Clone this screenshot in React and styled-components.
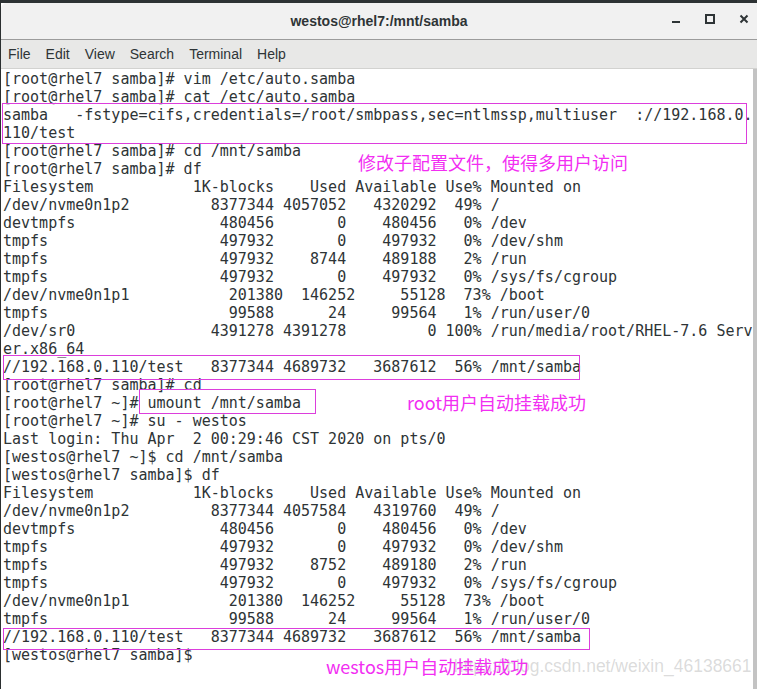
import React from "react";
import styled, { createGlobalStyle } from "styled-components";

const GlobalStyle = createGlobalStyle`
  html, body {
    margin: 0;
    padding: 0;
    background: #ffffff;
  }
  body {
    width: 757px;
    height: 689px;
    overflow: hidden;
  }
`;

const lines = [
  "[root@rhel7 samba]# vim /etc/auto.samba",
  "[root@rhel7 samba]# cat /etc/auto.samba",
  "samba   -fstype=cifs,credentials=/root/smbpass,sec=ntlmssp,multiuser  ://192.168.0.",
  "110/test",
  "[root@rhel7 samba]# cd /mnt/samba",
  "[root@rhel7 samba]# df",
  "Filesystem           1K-blocks    Used Available Use% Mounted on",
  "/dev/nvme0n1p2         8377344 4057052   4320292  49% /",
  "devtmpfs                480456       0    480456   0% /dev",
  "tmpfs                   497932       0    497932   0% /dev/shm",
  "tmpfs                   497932    8744    489188   2% /run",
  "tmpfs                   497932       0    497932   0% /sys/fs/cgroup",
  "/dev/nvme0n1p1           201380  146252     55128  73% /boot",
  "tmpfs                    99588      24     99564   1% /run/user/0",
  "/dev/sr0               4391278 4391278         0 100% /run/media/root/RHEL-7.6 Serv",
  "er.x86_64",
  "//192.168.0.110/test   8377344 4689732   3687612  56% /mnt/samba",
  "[root@rhel7 samba]# cd",
  "[root@rhel7 ~]# umount /mnt/samba",
  "[root@rhel7 ~]# su - westos",
  "Last login: Thu Apr  2 00:29:46 CST 2020 on pts/0",
  "[westos@rhel7 ~]$ cd /mnt/samba",
  "[westos@rhel7 samba]$ df",
  "Filesystem           1K-blocks    Used Available Use% Mounted on",
  "/dev/nvme0n1p2         8377344 4057584   4319760  49% /",
  "devtmpfs                480456       0    480456   0% /dev",
  "tmpfs                   497932       0    497932   0% /dev/shm",
  "tmpfs                   497932    8752    489180   2% /run",
  "tmpfs                   497932       0    497932   0% /sys/fs/cgroup",
  "/dev/nvme0n1p1           201380  146252     55128  73% /boot",
  "tmpfs                    99588      24     99564   1% /run/user/0",
  "//192.168.0.110/test   8377344 4689732   3687612  56% /mnt/samba",
  "[westos@rhel7 samba]$",
];

// magenta boxes drawn on top of the screenshot
const boxes = [
  { left: 1, top: 34, width: 745, height: 41 },
  { left: 2, top: 286, width: 577, height: 25 },
  { left: 138, top: 320, width: 177, height: 25 },
  { left: 2, top: 559, width: 587, height: 22 },
];

const menus = ["File", "Edit", "View", "Search", "Terminal", "Help"];

export default function App() {
  return (
    <>
      <GlobalStyle />
      <Window>
        <TopEdge />
        <TitleBar>
          <Title>westos@rhel7:/mnt/samba</Title>
          <Controls>
            <CtrlButton aria-label="minimize">
              <svg width="10" height="10" viewBox="0 0 10 10">
                <rect x="1" y="7" width="8" height="2" fill="#2e3436" />
              </svg>
            </CtrlButton>
            <CtrlButton aria-label="maximize">
              <svg width="10" height="10" viewBox="0 0 10 10">
                <rect x="1" y="1" width="8" height="8" fill="none" stroke="#2e3436" strokeWidth="2" />
              </svg>
            </CtrlButton>
            <CtrlButton aria-label="close">
              <svg width="10" height="10" viewBox="0 0 10 10">
                <path d="M1.5 1.5 L8.5 8.5 M8.5 1.5 L1.5 8.5" stroke="#2e3436" strokeWidth="2" />
              </svg>
            </CtrlButton>
          </Controls>
        </TitleBar>
        <MenuBar>
          {menus.map((m) => (
            <MenuItem key={m}>{m}</MenuItem>
          ))}
        </MenuBar>
        <TermArea>
          <Screen>
            {lines.map((l, i) => (
              <Line key={i}>{l}</Line>
            ))}
            {boxes.map((b, i) => (
              <MarkBox key={i} style={b} />
            ))}
            <Note $left={357} $top={83}>修改子配置文件，使得多用户访问</Note>
            <Note $left={406} $top={323}>root用户自动挂载成功</Note>
            <Watermark>https://blog.csdn.net/weixin_46138661</Watermark>
            <Note $left={325} $top={587}>westos用户自动挂载成功</Note>
          </Screen>
          <Scrollbar />
        </TermArea>
      </Window>
    </>
  );
}

const Window = styled.div`
  width: 757px;
  height: 689px;
  box-sizing: border-box;
  border-left: 1px solid #2b2f30;
  display: flex;
  flex-direction: column;
  background: #ffffff;
  overflow: hidden;
`;

const TopEdge = styled.div`
  height: 3px;
  background: #2d3234;
  flex: none;
`;

const TitleBar = styled.div`
  height: 36px;
  flex: none;
  position: relative;
  background: #f1f1f1;
  border-bottom: 1px solid #9c9c9c;
  border-top-left-radius: 6px;
  display: flex;
  align-items: center;
  justify-content: center;
`;

const Title = styled.div`
  font-family: "Liberation Sans", Arial, sans-serif;
  font-size: 14px;
  font-weight: 700;
  color: #2e3436;
  margin-top: -1px;
`;

const Controls = styled.div`
  position: absolute;
  right: 8px;
  top: 0;
  bottom: 0;
  display: flex;
  align-items: center;
  gap: 24px;
`;

const CtrlButton = styled.div`
  width: 10px;
  height: 10px;
  display: flex;
  margin-top: -4px;
`;

const MenuBar = styled.div`
  height: 28px;
  flex: none;
  background: #e8e8e7;
  border-bottom: 1px solid #d2d2d0;
  display: flex;
  align-items: center;
  gap: 15px;
  padding-left: 7px;
`;

const MenuItem = styled.span`
  font-family: "Liberation Sans", Arial, sans-serif;
  font-size: 14px;
  color: #2e3436;
`;

const TermArea = styled.div`
  flex: 1;
  display: flex;
  min-height: 0;
`;

const Screen = styled.div`
  flex: 1;
  position: relative;
  padding: 1px 0 0 2px;
  background: #ffffff;
`;

const Line = styled.div`
  font-family: "DejaVu Sans Mono", monospace;
  font-size: 15px;
  line-height: 18px;
  height: 18px;
  white-space: pre;
  color: #2e3436;
`;

const Scrollbar = styled.div`
  width: 7px;
  flex: none;
  background: #c3c3c3;
`;

const MarkBox = styled.div`
  position: absolute;
  box-sizing: border-box;
  border: 1px solid #dc3edc;
`;

const Note = styled.div`
  position: absolute;
  left: ${(p) => p.$left}px;
  top: ${(p) => p.$top}px;
  font-family: "Noto Sans CJK SC", "Noto Sans", sans-serif;
  font-size: 18px;
  line-height: 20px;
  color: #f22ef2;
  white-space: nowrap;
`;

const Watermark = styled.div`
  position: absolute;
  right: 1px;
  top: 587px;
  font-family: "Liberation Sans", Arial, sans-serif;
  font-size: 17.5px;
  line-height: 20px;
  color: rgba(175, 175, 175, 0.45);
  white-space: nowrap;
`;
